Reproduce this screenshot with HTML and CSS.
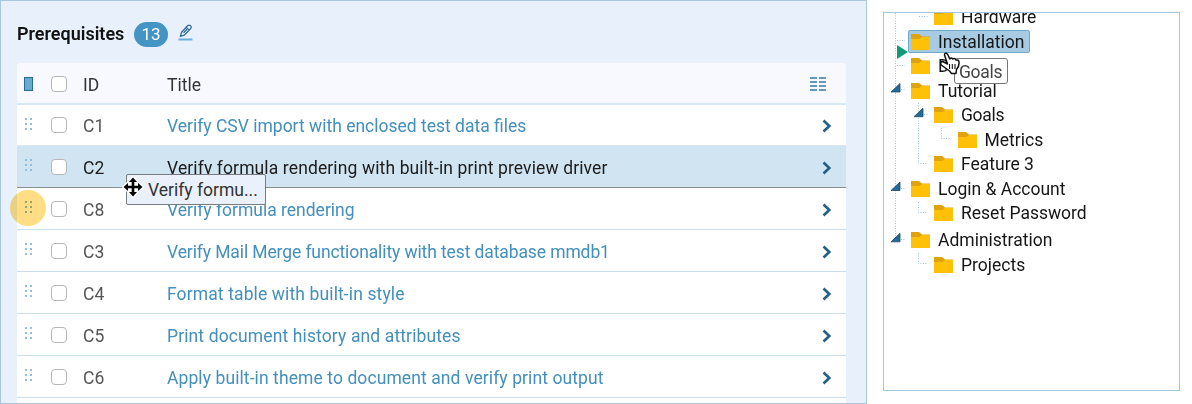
FILE: index.html
```html
<!DOCTYPE html>
<html lang="en">
<head>
<meta charset="utf-8">
<title>Prerequisites</title>
<link rel="stylesheet" href="styles.css">
</head>
<body>
<svg class="defs" aria-hidden="true">
  <symbol id="grip" viewBox="0 0 10 14"><path d="M1 1h2v2H1zM6 1h2v2H6zM1 6h2v2H1zM6 6h2v2H6zM1 11h2v2H1zM6 11h2v2H6z" fill="#93bfdc"/></symbol>
  <symbol id="chev" viewBox="0 0 10 14"><path d="M1.500 1.500 7.300 7 1.500 12.500" fill="none" stroke="#226089" stroke-width="2.600"/></symbol>
  <symbol id="folder" viewBox="0 0 19 16"><path d="M0 0h8l3 2.500h8V16H0z" fill="#e0a30c"/><path d="M0 5h8.500l2.500-2H19V16H0z" fill="#ffc107"/></symbol>
</svg>
<div class="layout">
  <section class="panel">
    <header class="head">
      <h1 class="heading">Prerequisites</h1>
      <span class="badge">13</span>
      <svg class="edit" width="16" height="18" viewBox="0 0 16 18"><path d="M2.500 12.300 3.500 8.300 9.500 1.800Q11 .4 12.500 1.700T12.500 4.700L6.200 11.200zM8.200 3.300l2.900 2.800M5.500 8.800 9 5.200" fill="none" stroke="#2f6c9b" stroke-width="1.300"/><path d="M.5 15.500h14" stroke="#6aaedb" stroke-width="2"/></svg>
    </header>
    <div class="table">
      <div class="row row-head"><i class="mark"></i><i class="check"></i><span class="id">ID</span><span class="title">Title</span>
        <svg class="cols" width="16" height="14" viewBox="0 0 16 14"><path d="M0 1h7M9 1h7M0 5h7M9 5h7M0 9h7M9 9h7M0 13h7M9 13h7" stroke="#37799f" stroke-width="1.600"/></svg></div>
      <div class="row first"><svg class="grip"><use href="#grip"/></svg><i class="check"></i><span class="id">C1</span><span class="title">Verify CSV import with enclosed test data files</span><svg class="chev"><use href="#chev"/></svg></div>
      <div class="row active"><svg class="grip"><use href="#grip"/></svg><i class="check"></i><span class="id">C2</span><span class="title wide">Verify formula rendering with built-in print preview driver</span><svg class="chev"><use href="#chev"/></svg></div>
      <div class="row"><svg class="grip"><use href="#grip"/></svg><i class="check"></i><span class="id">C8</span><span class="title">Verify formula rendering</span><svg class="chev"><use href="#chev"/></svg></div>
      <div class="row"><svg class="grip"><use href="#grip"/></svg><i class="check"></i><span class="id">C3</span><span class="title tight">Verify Mail Merge functionality with test database mmdb1</span><svg class="chev"><use href="#chev"/></svg></div>
      <div class="row"><svg class="grip"><use href="#grip"/></svg><i class="check"></i><span class="id">C4</span><span class="title wide">Format table with built-in style</span><svg class="chev"><use href="#chev"/></svg></div>
      <div class="row"><svg class="grip"><use href="#grip"/></svg><i class="check"></i><span class="id">C5</span><span class="title wide">Print document history and attributes</span><svg class="chev"><use href="#chev"/></svg></div>
      <div class="row"><svg class="grip"><use href="#grip"/></svg><i class="check"></i><span class="id">C6</span><span class="title mid">Apply built-in theme to document and verify print output</span><svg class="chev"><use href="#chev"/></svg></div>
      <div class="row"></div>
    </div>
    <i class="spot"></i>
    <div class="drag"><span>Verify formu...</span></div>
    <svg class="move" width="24" height="24" viewBox="-12 -12 24 24"><path d="M0-9.500 4-5H1.300v3.700H5V-4l4.500 4L5 4V1.300H1.300V5H4L0 9.500-4 5h2.700V1.300H-5V4L-9.500 0-5-4v2.700h3.700V-5H-4z" fill="#000" stroke="#fff" stroke-width="3" paint-order="stroke" stroke-linejoin="round"/></svg>
  </section>
  <aside class="tree">
    <svg class="guides" width="295" height="377" viewBox="884 13 295 377">
      <g fill="none" stroke="#9cc5dc" stroke-width="1" stroke-dasharray="1 1.500"><path d="M895.500 13V237M897 40.500h8M897 65.500h8M901 89.500h4M919 16.500h9M918.500 103V163.500h9M924 114.500h4M941.500 128V138.500h9M901 188.500h4M918.500 202V212.500h9M901 239.500h4M918.500 253V263.500h9"/></g>
      <path d="M891 92 900 83.500V92zM914 116.700 923 108.200V116.700zM891 190.500 900 182V190.500zM891 241.800 900 233.300V241.800z" fill="#246a98" stroke="#1d4869" stroke-width=".8"/>
    </svg>
    <ul class="nodes">
      <li class="node l1"><svg class="folder"><use href="#folder"/></svg><span>Hardware</span></li>
      <li class="node"><span class="picked"><svg class="folder"><use href="#folder"/></svg><span>Installation</span></span></li>
      <li class="node"><svg class="folder"><use href="#folder"/></svg><span>D</span></li>
      <li class="node"><svg class="folder"><use href="#folder"/></svg><span>Tutorial</span></li>
      <li class="node l1"><svg class="folder"><use href="#folder"/></svg><span class="snug">Goals</span></li>
      <li class="node l2"><svg class="folder"><use href="#folder"/></svg><span>Metrics</span></li>
      <li class="node l1"><svg class="folder"><use href="#folder"/></svg><span>Feature 3</span></li>
      <li class="node"><svg class="folder"><use href="#folder"/></svg><span>Login &amp; Account</span></li>
      <li class="node l1"><svg class="folder"><use href="#folder"/></svg><span>Reset Password</span></li>
      <li class="node gap"><svg class="folder"><use href="#folder"/></svg><span>Administration</span></li>
      <li class="node l1"><svg class="folder"><use href="#folder"/></svg><span>Projects</span></li>
    </ul>
    <svg class="drop" width="11" height="14" viewBox="0 0 11 14"><path d="M0 0 11 7 0 14z" fill="#109b78"/></svg>
    <div class="ghost"><span class="snug">Goals</span></div>
    <svg class="hand" width="22" height="26" viewBox="0 0 22 26"><path d="M9.500 19 1.200 13Q-.3 9.500 2.800 9.500L7.500 12 4.500 3Q4.500 .8 6.500 1.200L7.700 2.500 9.800 7Q11.300 5 12.800 7 14.800 5.500 15.800 8 18.800 7.500 19 10 19.500 14 16.500 17.500L16 21.500H11.500z" fill="#fff" stroke="#111" stroke-width="1.500" stroke-linejoin="round"/><path d="M9.500 12v5M12.300 12v5M15 12v5" stroke="#111" stroke-width="1.100"/></svg>
  </aside>
</div>
</body>
</html>
```
FILE: styles.css
```css
* { box-sizing: border-box; }
body { margin: 0; background: #fff; font: 17.5px/24px Roboto, "Liberation Sans", sans-serif; color: #1c1c1c; overflow: hidden; }
.defs { position: absolute; width: 0; height: 0; }
.layout { display: flex; gap: 16px; height: 404px; align-items: flex-start; }
.panel { position: relative; width: 867px; height: 404px; padding: 0 20px 0 16px; border: 1px solid #a9c8dc; background: #e8f1fb; overflow: hidden; }
.head { display: flex; align-items: center; height: 62px; padding-top: 4px; }
.heading { margin: 0; width: 117px; font-size: 18px; font-weight: 600; white-space: nowrap; color: #111; }
.badge { width: 34px; height: 25px; border-radius: 13px; background: #4494c4; color: #fff; font-size: 17px; line-height: 25px; text-align: center; }
.edit { margin: -3px 0 0 10px; }
.table { width: 829px; border-radius: 4px 4px 0 0; background: #fff; overflow: hidden; }
.row { display: flex; align-items: center; height: 42px; border-bottom: 1px solid #c9dfed; padding-left: 7px; }
.row-head { padding-top: 2px; border-bottom: 2px solid #d8e9f4; background: #f7f9ff; }
.first { height: 41px; border-bottom-color: #d8e9f3; }
.active { background: #d0e4f1; border-bottom-color: #87908f; }
.mark { width: 9px; height: 14px; border: 1px solid #256a97; background: #69a9d2; }
.grip { width: 10px; height: 14px; margin: -3px -1px 0 0; }
.check { width: 16px; height: 16px; margin: 0 16px 0 18px; border: 1px solid #b6b6b6; border-radius: 4px; background: #fff; }
.id { width: 84px; padding-top: 2px; color: #555; }
.title { flex: 1; padding-top: 2px; color: #438fbd; white-space: nowrap; }
.row-head .id, .row-head .title { padding-top: 1px; color: #333; }
.active .id, .active .title { color: #1c1c1c; }
.wide { letter-spacing: .12px; }
.mid { letter-spacing: .09px; }
.tight { letter-spacing: -.11px; }
.chev { width: 10px; height: 14px; margin: 2px 14px 0 0; }
.cols { margin-right: 20px; }
.spot { position: absolute; left: 9px; top: 189px; width: 36px; height: 36px; border-radius: 50%; background: #ffcf50; opacity: .7; mix-blend-mode: multiply; }
.drag { position: absolute; left: 125px; top: 173px; width: 140px; height: 31px; padding: 3px 0 0 21px; border: 1px solid #777c82; border-radius: 2px; background: #eaf1fc; color: #333; white-space: nowrap; }
.move { position: absolute; left: 120px; top: 174px; }
.tree { position: relative; width: 297px; height: 379px; margin-top: 12px; border: 1px solid #a3c8dc; background: #fff; overflow: hidden; }
.guides { position: absolute; left: 0; top: 0; }
.nodes { position: relative; list-style: none; margin: -8px 0 0; padding: 0 0 0 27px; }
.node { display: flex; align-items: center; height: 24.5px; white-space: nowrap; color: #161616; }
.node.l1 { padding-left: 23px; }
.node.l2 { padding-left: 46.5px; }
.node.gap { margin-top: 2.5px; }
.folder { flex: none; width: 19px; height: 16px; margin-right: 8px; }
.snug { letter-spacing: -.3px; }
.picked { display: flex; align-items: center; width: 122px; height: 23px; margin-left: -3px; padding-left: 2px; border: 1px solid #6fa9cc; border-radius: 2px; background: #a7cbe3; }
.drop { position: absolute; left: 13px; top: 32px; }
.ghost { position: absolute; left: 70px; top: 45px; width: 54px; height: 26px; padding: 1px 0 0 4px; border: 1px solid #777; border-radius: 3px; background: rgba(255,255,255,.92); color: #444; }
.hand { position: absolute; left: 56px; top: 39px; }
```
